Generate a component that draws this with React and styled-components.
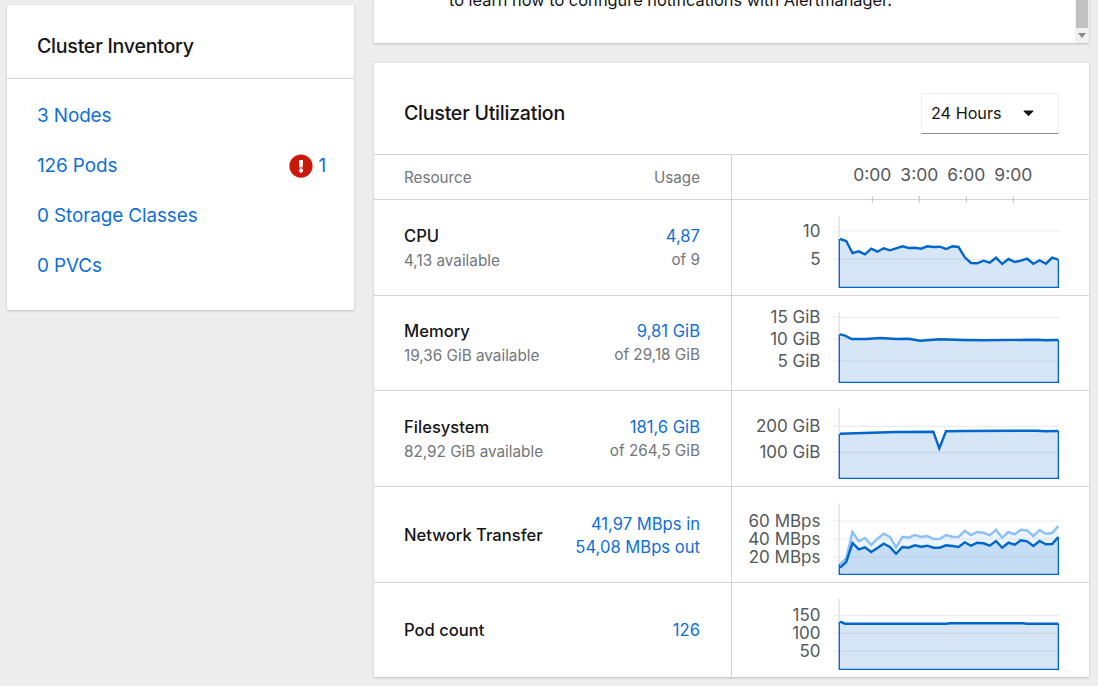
import React from 'react';
import styled, { createGlobalStyle } from 'styled-components';
import { FaExclamationCircle, FaCaretDown } from 'react-icons/fa';

const FONT = '"Inter", "Noto Sans", "Liberation Sans", sans-serif';

const Global = createGlobalStyle`
  html, body { margin: 0; padding: 0; height: 686px; overflow: hidden; background: #ededed; }
  body { font-family: ${FONT}; color: #151515; }
  * { box-sizing: border-box; }
`;

const Page = styled.div`
  display: grid;
  grid-template-columns: 347px 715px;
  column-gap: 20px;
  padding-left: 7px;
  height: 686px;
  overflow: hidden;
  align-items: start;
`;
const Card = styled.section`
  background: #fff;
  box-shadow: 0 1px 2px rgba(3, 3, 3, 0.2), 0 0 1px rgba(3, 3, 3, 0.08);
`;
const InventoryCard = styled(Card)`
  margin-top: 5px;
  height: 305px;
`;
const InventoryHead = styled.h2`
  margin: 0;
  height: 74px;
  padding: 8px 30px 0;
  display: flex;
  align-items: center;
  font-size: 19.6px;
  font-weight: 500;
  letter-spacing: -0.25px;
  border-bottom: 1px solid #d2d2d2;
`;
const InventoryList = styled.div`
  display: flex;
  flex-direction: column;
  padding: 11.6px 28px 0 30px;
`;
const InventoryRow = styled.div`
  height: 50.1px;
  display: flex;
  align-items: center;
  justify-content: space-between;
`;
const BlueLink = styled.a`
  color: #0f6fd6;
  font-size: 18.9px;
  letter-spacing: -0.1px;
  text-decoration: none;
`;
const Status = styled.span`
  display: flex;
  align-items: center;
  gap: 5px;
  color: #c9190b;
  font-size: 24px;
`;
const RightColumn = styled.div`
  display: flex;
  flex-direction: column;
  gap: 20px;
`;
const NoticeCard = styled(Card)`
  position: relative;
  height: 43px;
  overflow: hidden;
  padding: 0 0 31px 75px;
  display: flex;
  align-items: flex-end;
`;
const NoticeText = styled.p`
  margin: 0;
  line-height: 24px;
  font-size: 16.35px;
  white-space: nowrap;
`;
const ScrollTrack = styled.div`
  position: absolute;
  top: 0;
  right: 0;
  bottom: 0;
  width: 14px;
  background: #f1f1f1;
`;
const ScrollThumb = styled.div`
  height: 28px;
  margin: 0 1px;
  background: #c1c1c1;
`;
const ScrollArrow = styled.div`
  width: 0;
  margin: 5px auto 0;
  border-left: 4px solid transparent;
  border-right: 4px solid transparent;
  border-top: 5px solid #8a8a8a;
`;
const UtilCard = styled(Card)`
  height: 614px;
`;
const UtilHead = styled.div`
  height: 91px;
  padding: 10px 30px 0;
  display: flex;
  align-items: center;
  justify-content: space-between;
`;
const UtilTitle = styled.h2`
  margin: 0 0 2px;
  font-size: 19.6px;
  font-weight: 500;
  letter-spacing: -0.25px;
`;
const Select = styled.div`
  width: 138px;
  height: 41px;
  padding: 0 21px 2px 9px;
  display: flex;
  align-items: center;
  justify-content: space-between;
  border: 1px solid #f0f0f0;
  border-bottom-color: #8a8d90;
  font-size: 16.2px;
`;
const Row = styled.div`
  height: ${p => p.$h}px;
  display: grid;
  grid-template-columns: 357px 1fr;
  border-top: 1px solid #d2d2d2;
`;
const Info = styled.div`
  padding: ${p => (p.$flush ? 0 : 1)}px 31px 0 30px;
  display: flex;
  align-items: center;
  justify-content: space-between;
`;
const HeadLabel = styled.span`
  font-size: 15.2px;
  color: #72767b;
`;
const Stack = styled.div`
  display: flex;
  flex-direction: column;
  gap: 3px;
  align-items: ${p => (p.$end ? 'flex-end' : 'flex-start')};
`;
const Name = styled.span`
  font-size: 16.6px;
  font-weight: 500;
  line-height: 22px;
`;
const Sub = styled.span`
  font-size: 15.3px;
  color: #72767b;
  line-height: 22px;
`;
const Value = styled.a`
  font-size: 16.6px;
  color: #0f6fd6;
  line-height: 20px;
`;
const ChartCell = styled.div`
  border-left: 1px solid #d2d2d2;
  min-width: 0;
`;
const ChartSvg = styled.svg`
  display: block;
  width: 357px;
  height: 100%;
  overflow: visible;
`;
const AxisText = styled.text`
  font-family: ${FONT};
  font-size: ${p => p.$size || 17}px;
  fill: #55585c;
`;

const X0 = 732;
const px = zx => 730 + zx / 3 - X0;
const STEP = (985 - 330) / 35;

const series = (ys, origin, rowTop) =>
  ys.map((zy, i) => [px(330 + STEP * i), origin + zy / 3 - rowTop]);
const pairs = (list, origin, rowTop) =>
  list.map(([zx, zy]) => [px(zx), origin + zy / 3 - rowTop]);
const toPath = pts => pts.map(([x, y], i) => `${i ? 'L' : 'M'}${x.toFixed(1)} ${y.toFixed(1)}`).join(' ');

function Chart({ rowTop, h, top, bottom, ticks, lines }) {
  const l = px(330) - 0.7;
  const r = px(985);
  const by = bottom - rowTop;
  const last = lines[lines.length - 1].pts;
  return (
    <ChartSvg viewBox={`0 0 357 ${h - 1}`} preserveAspectRatio="xMinYMin meet">
      <line x1={l - 0.3} x2={l - 0.3} y1={top - rowTop} y2={by} stroke="#d2d2d2" strokeWidth="1" />
      {ticks.map(t => (
        <g key={t.label}>
          <line x1={px(308)} x2={px(988)} y1={t.y - rowTop} y2={t.y - rowTop} stroke="#ececec" strokeWidth="1.2" />
          <AxisText x={88.5} y={t.y - rowTop + 6.1} textAnchor="end">{t.label}</AxisText>
        </g>
      ))}
      {lines.map((ln, i) => {
        const area = `${toPath(ln.pts)} L${r} ${by} L${l} ${by} Z`;
        return <path key={i} d={area} fill={ln.color} fillOpacity={ln.fillOpacity} stroke="none" />;
      })}
      {lines.map((ln, i) => (
        <path key={i} d={toPath(ln.pts)} fill="none" stroke={ln.color} strokeWidth="2.4" strokeLinejoin="miter" />
      ))}
      <path d={`M${l} ${lines[0].pts[0][1]} L${l} ${by} L${r} ${by} L${r} ${last[last.length - 1][1]}`} fill="none" stroke="#0066cc" strokeWidth="1.3" />
    </ChartSvg>
  );
}

function TimeAxis() {
  const xs = [872.3, 919.3, 966.3, 1013.3].map(x => x - X0);
  const labels = ['0:00', '3:00', '6:00', '9:00'];
  return (
    <ChartSvg viewBox="0 0 357 44" preserveAspectRatio="xMinYMin meet">
      {xs.map((x, i) => (
        <g key={x}>
          <AxisText x={x} y={25.5} textAnchor="middle" $size={17.5}>{labels[i]}</AxisText>
          <line x1={x} x2={x} y1={41} y2={48} stroke="#c4c4c4" />
        </g>
      ))}
    </ChartSvg>
  );
}

const BLUE = '#0066cc';
const LIGHT = '#8bc1f7';

const cpuY = [267,273,309,304,313,296,305,295,301,295,289,294,293,296,289,291,290,297,289,291,322,339,340,332,338,323,342,327,336,332,326,341,331,341,323,329];
const netDark = [245,228,171,190,184,198,186,173,183,203,183,185,178,182,179,185,185,178,180,183,169,179,170,172,179,165,185,170,176,163,166,180,165,175,174,153];
const netLight = [235,216,138,166,156,177,158,143,153,184,152,155,147,153,150,159,158,147,152,153,134,147,138,140,148,131,155,138,145,131,133,150,132,143,141,120];

const rows = [
  {
    h: 96, top: 200, name: 'CPU', sub: '4,13 available', value: '4,87', of: 'of 9',
    chart: {
      top: 216, bottom: 287.3,
      ticks: [{ label: '10', y: 231 }, { label: '5', y: 259.3 }],
      lines: [{ color: BLUE, fillOpacity: 0.16, pts: series(cpuY, 150, 200) }],
    },
  },
  {
    h: 95, top: 296, name: 'Memory', sub: '19,36 GiB available', value: '9,81 GiB', of: 'of 29,18 GiB',
    chart: {
      top: 311.7, bottom: 382.3,
      ticks: [{ label: '15 GiB', y: 317.3 }, { label: '10 GiB', y: 339 }, { label: '5 GiB', y: 361 }],
      lines: [{ color: BLUE, fillOpacity: 0.16, pts: pairs([[330,118],[345,122],[365,132],[410,132],[450,129],[500,132],[535,131],[570,137],[630,133],[700,135],[760,136],[920,134],[945,136],[985,135]], 295, 296) }],
    },
  },
  {
    h: 96, top: 391, name: 'Filesystem', sub: '82,92 GiB available', value: '181,6 GiB', of: 'of 264,5 GiB',
    chart: {
      top: 407.7, bottom: 478.3,
      ticks: [{ label: '200 GiB', y: 426.3 }, { label: '100 GiB', y: 452.3 }],
      lines: [{ color: BLUE, fillOpacity: 0.16, pts: pairs([[330,416],[400,414],[500,411],[610,410],[628,460],[648,409],[700,408],[920,407],[945,409],[985,408]], 295, 391) }],
    },
  },
  {
    h: 96, top: 487, name: 'Network Transfer', value: '41,97 MBps in', value2: '54,08 MBps out',
    chart: {
      top: 503.3, bottom: 574.3,
      ticks: [{ label: '60 MBps', y: 521 }, { label: '40 MBps', y: 539 }, { label: '20 MBps', y: 557 }],
      lines: [
        { color: LIGHT, fillOpacity: 0.16, pts: series(netLight, 486, 487) },
        { color: BLUE, fillOpacity: 0.16, pts: series(netDark, 486, 487) },
      ],
    },
  },
  {
    h: 95, top: 583, name: 'Pod count', value: '126', flush: true,
    chart: {
      top: 598.7, bottom: 669.3,
      ticks: [{ label: '150', y: 615.3 }, { label: '100', y: 633.3 }, { label: '50', y: 651.3 }],
      lines: [{ color: BLUE, fillOpacity: 0.16, pts: pairs([[330,407],[345,413],[650,413],[660,412],[880,412],[890,413],[985,413]], 486, 583) }],
    },
  },
];

export default function App() {
  return (
    <>
      <Global />
      <Page>
        <InventoryCard>
          <InventoryHead>Cluster Inventory</InventoryHead>
          <InventoryList>
            <InventoryRow><BlueLink>3 Nodes</BlueLink></InventoryRow>
            <InventoryRow>
              <BlueLink>126 Pods</BlueLink>
              <Status><FaExclamationCircle /><BlueLink>1</BlueLink></Status>
            </InventoryRow>
            <InventoryRow><BlueLink>0 Storage Classes</BlueLink></InventoryRow>
            <InventoryRow><BlueLink>0 PVCs</BlueLink></InventoryRow>
          </InventoryList>
        </InventoryCard>
        <RightColumn>
          <NoticeCard>
            <NoticeText>to learn how to configure notifications with Alertmanager.</NoticeText>
            <ScrollTrack><ScrollThumb /><ScrollArrow /></ScrollTrack>
          </NoticeCard>
          <UtilCard>
            <UtilHead>
              <UtilTitle>Cluster Utilization</UtilTitle>
              <Select>24 Hours <FaCaretDown size={17} /></Select>
            </UtilHead>
            <Row $h={45}>
              <Info><HeadLabel>Resource</HeadLabel><HeadLabel>Usage</HeadLabel></Info>
              <ChartCell><TimeAxis /></ChartCell>
            </Row>
            {rows.map(r => (
              <Row key={r.name} $h={r.h}>
                <Info $flush={r.flush}>
                  <Stack>
                    <Name>{r.name}</Name>
                    {r.sub && <Sub>{r.sub}</Sub>}
                  </Stack>
                  <Stack $end>
                    <Value>{r.value}</Value>
                    {r.of && <Sub>{r.of}</Sub>}
                    {r.value2 && <Value>{r.value2}</Value>}
                  </Stack>
                </Info>
                <ChartCell>
                  <Chart rowTop={r.top} h={r.h} {...r.chart} />
                </ChartCell>
              </Row>
            ))}
          </UtilCard>
        </RightColumn>
      </Page>
    </>
  );
}
